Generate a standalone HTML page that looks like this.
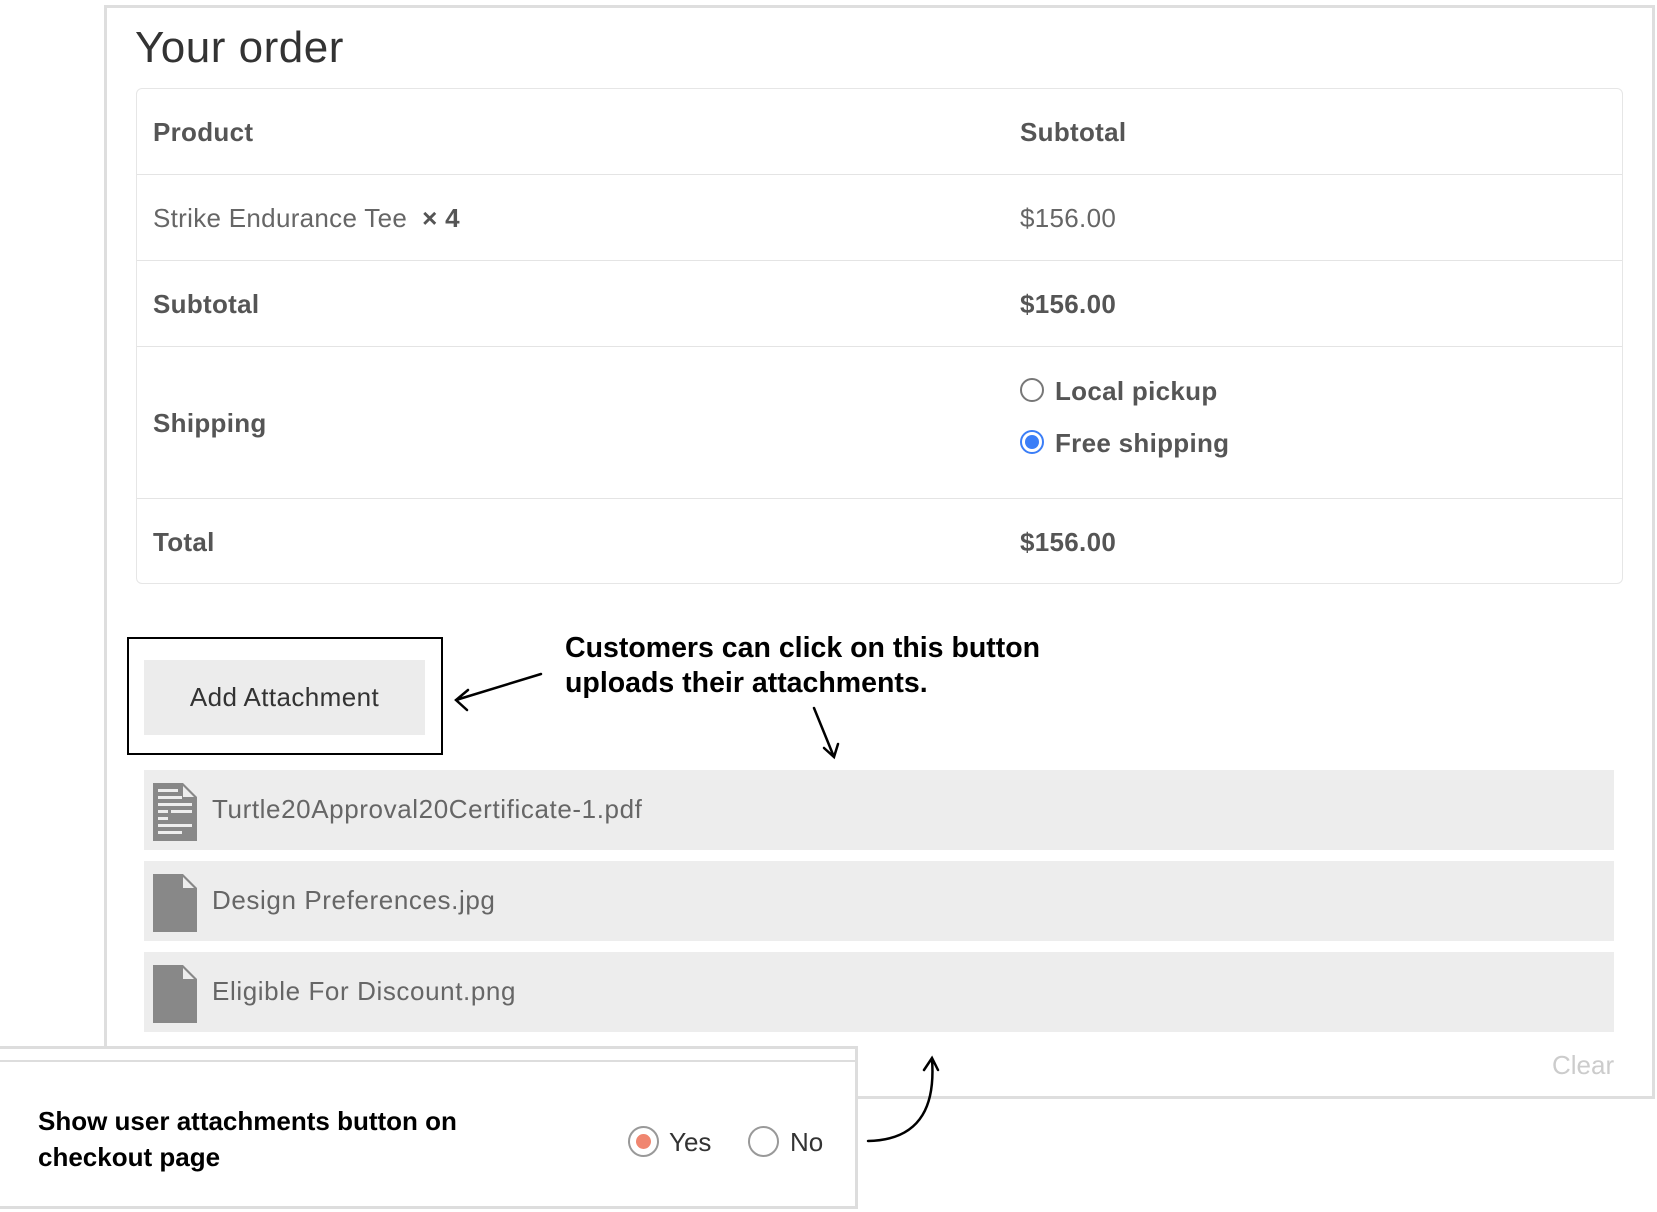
<!DOCTYPE html>
<html><head><meta charset="utf-8"><style>
*{margin:0;padding:0;box-sizing:border-box}
body{width:1657px;height:1212px;background:#fff;position:relative;overflow:hidden;font-family:"Liberation Sans",sans-serif}
.a{position:absolute}
.panel{left:104px;top:5px;width:1551px;height:1094px;border:3px solid #dedede;border-right-width:3px}
.title{left:135px;top:23px;font-size:44px;color:#333;line-height:50px;letter-spacing:0.5px}
.tbl{left:136px;top:88px;width:1487px;height:496px;border:1px solid #e6e6e6;border-radius:6px}
.row{position:absolute;left:0;width:100%;border-top:1px solid #e4e4e4}
.c1,.c2{position:absolute;font-size:26px;color:#555;letter-spacing:0.3px}
.c1{left:16px}.c2{left:883px}
.b{font-weight:bold}
.file{left:144px;width:1470px;height:80px;background:#ededed}
.file span{position:absolute;left:68px;top:24px;font-size:26px;color:#666;letter-spacing:0.6px}
.file svg{position:absolute;left:9px;top:13px}
.ann{font-weight:bold;font-size:28.5px;color:#000;line-height:35px}
</style></head><body>
<div class="a panel"></div>
<div class="a title">Your order</div>
<div class="a tbl">
 <div class="c1 b" style="top:28px">Product</div><div class="c2 b" style="top:28px">Subtotal</div>
 <div class="row" style="top:85px;height:86px"><div class="c1" style="top:28px;color:#666">Strike Endurance Tee&nbsp; <b style="color:#555">× 4</b></div><div class="c2" style="top:28px;color:#666">$156.00</div></div>
 <div class="row" style="top:171px;height:86px"><div class="c1 b" style="top:28px">Subtotal</div><div class="c2 b" style="top:28px">$156.00</div></div>
 <div class="row" style="top:257px;height:152px">
  <div class="c1 b" style="top:61px">Shipping</div>
  <div class="a" style="left:883px;top:31px;width:24px;height:24px;border:2px solid #777;border-radius:50%"></div>
  <div class="c2 b" style="left:918px;top:29px">Local pickup</div>
  <div class="a" style="left:883px;top:83px;width:24px;height:24px;border:2px solid #3b7ef7;border-radius:50%;padding:3px"><div style="width:14px;height:14px;margin:0;border-radius:50%;background:#3b7ef7"></div></div>
  <div class="c2 b" style="left:918px;top:81px">Free shipping</div>
 </div>
 <div class="row" style="top:409px;height:86px"><div class="c1 b" style="top:28px">Total</div><div class="c2 b" style="top:28px">$156.00</div></div>
</div>
<div class="a" style="left:127px;top:637px;width:316px;height:118px;border:2.5px solid #000"></div>
<div class="a" style="left:144px;top:660px;width:281px;height:75px;background:#ececec;font-size:26px;color:#333;text-align:center;line-height:75px;letter-spacing:0.4px">Add Attachment</div>
<div class="a ann" style="left:565px;top:631px">Customers can click on this button<br>uploads their attachments.</div>
<svg class="a" style="left:0;top:0" width="1657" height="1212" fill="none" stroke="#000" stroke-width="2.5" stroke-linecap="round">
 <path d="M541 674 L456 700 M468 690 L456 700 L467 710"/>
 <path d="M814 708 L834 757 M824 748 L834 757 L838 744"/>
 <path d="M868 1141 C925 1140 935 1100 932 1059 M924 1070 L932 1058 L938 1070"/>
</svg>
<div class="a file" style="top:770px"><svg width="44" height="58" viewBox="0 0 44 58"><path d="M0 0H30L44 14V58H0Z" fill="#888"/><g fill="#ededed"><rect x="5" y="6" width="20" height="3"/><rect x="5" y="13" width="24" height="3"/><rect x="5" y="20" width="34" height="3"/><rect x="5" y="27" width="10" height="3"/><rect x="18" y="27" width="21" height="3"/><rect x="5" y="34" width="10" height="3"/><rect x="5" y="41" width="34" height="3"/><rect x="5" y="48" width="24" height="3"/></g><path d="M30 3V14H41Z" fill="#ededed"/></svg><span>Turtle20Approval20Certificate-1.pdf</span></div>
<div class="a file" style="top:861px"><svg width="44" height="58" viewBox="0 0 44 58"><path d="M0 0H30L44 14V58H0Z" fill="#888"/><path d="M30 3V14H41Z" fill="#ededed"/></svg><span>Design Preferences.jpg</span></div>
<div class="a file" style="top:952px"><svg width="44" height="58" viewBox="0 0 44 58"><path d="M0 0H30L44 14V58H0Z" fill="#888"/><path d="M30 3V14H41Z" fill="#ededed"/></svg><span>Eligible For Discount.png</span></div>
<div class="a" style="left:1552px;top:1050px;font-size:26px;color:#ccc">Clear</div>
<div class="a" style="left:0;top:1046px;width:858px;height:163px;background:#fff;border:3px solid #ddd;border-left:none"></div>
<div class="a" style="left:0;top:1060px;width:856px;height:2px;background:#ddd"></div>
<div class="a" style="left:38px;top:1103px;font-size:26px;font-weight:bold;color:#000;line-height:36px">Show user attachments button on<br>checkout page</div>
<div class="a" style="left:628px;top:1126px;width:31px;height:31px;border:2px solid #999;border-radius:50%;padding:6px"><div style="width:15px;height:15px;border-radius:50%;background:#f08670"></div></div>
<div class="a" style="left:669px;top:1127px;font-size:26px;color:#333">Yes</div>
<div class="a" style="left:748px;top:1126px;width:31px;height:31px;border:2px solid #999;border-radius:50%"></div>
<div class="a" style="left:790px;top:1127px;font-size:26px;color:#333">No</div>
</body></html>
